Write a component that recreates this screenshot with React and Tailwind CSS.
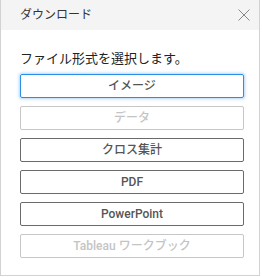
import React from "react";

const FORMATS = [
  { label: "イメージ", state: "focus" },
  { label: "データ", state: "disabled" },
  { label: "クロス集計", state: "normal" },
  { label: "PDF", state: "normal" },
  { label: "PowerPoint", state: "normal" },
  { label: "Tableau ワークブック", state: "disabled" },
];

const FONT = {
  fontFamily: '"Noto Sans", "Noto Sans CJK JP", sans-serif',
};

const BTN_FONT = {
  fontFamily: 'Roboto, "Noto Sans CJK JP", sans-serif',
};

function FormatButton({ label, state }) {
  const base =
    "flex h-[24px] w-[224px] items-center justify-center rounded-[2px] border text-[12px] leading-none font-medium";
  const looks = {
    focus: "border-[#2a8fe6] text-[#555] shadow-[0_0_3px_1px_rgba(80,160,240,0.45)]",
    normal: "border-[#6a6a6a] text-[#555]",
    disabled: "border-[#c6c6c6] text-[#c4c4c4]",
  };
  return (
    <button type="button" className={`${base} ${looks[state]}`} style={BTN_FONT}>
      {label}
    </button>
  );
}

export default function App() {
  return (
    <div className="h-[277px] w-[262px] bg-white" style={FONT}>
      <div className="flex h-[276px] w-[260px] flex-col border-x border-b border-[#d2d2d2]">
        <div className="flex h-[30px] items-center justify-between bg-[#f4f4f4] pr-[8px] pl-[19px]">
          <span className="text-[12px] text-[#333]">ダウンロード</span>
          <svg width="14" height="14" viewBox="0 0 14 14" className="text-[#888]">
            <path d="M1.5 1.5L12.5 12.5M12.5 1.5L1.5 12.5" stroke="currentColor" strokeWidth="1" />
          </svg>
        </div>
        <div className="flex flex-col px-[19px] pt-[19px]">
          <p className="text-[13px] leading-[18px] text-[#222]">ファイル形式を選択します。</p>
          <div className="mt-[7px] flex flex-col gap-[8px]">
            {FORMATS.map((f) => (
              <FormatButton key={f.label} {...f} />
            ))}
          </div>
        </div>
      </div>
    </div>
  );
}
